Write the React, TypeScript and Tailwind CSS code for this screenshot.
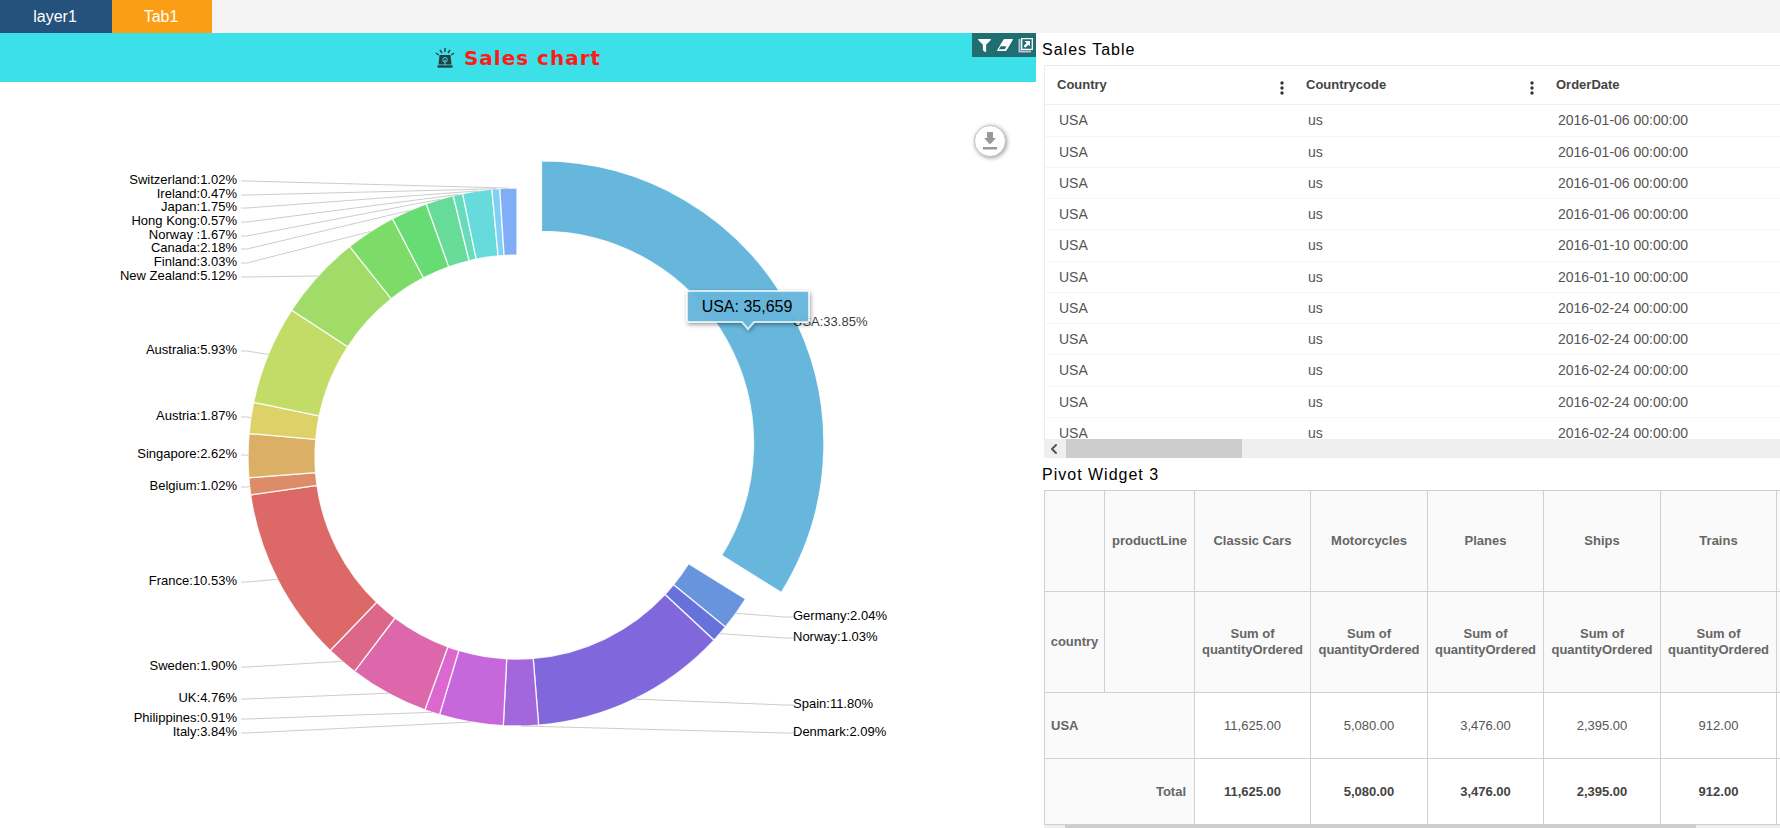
import { FaFilter } from "react-icons/fa";
import { LuChevronLeft } from "react-icons/lu";

type Slice = {
  country: string;
  percent: number;
  color: string;
  labelY: number;
};

const slices: Slice[] = [
  { country: "USA", percent: 33.85, color: "#67b7dc", labelY: 244 },
  { country: "Germany", percent: 2.04, color: "#6794dc", labelY: 538 },
  { country: "Norway", percent: 1.03, color: "#6771dc", labelY: 559 },
  { country: "Spain", percent: 11.8, color: "#8067dc", labelY: 626 },
  { country: "Denmark", percent: 2.09, color: "#a367dc", labelY: 654 },
  { country: "Italy", percent: 3.84, color: "#c767dc", labelY: 654 },
  { country: "Philippines", percent: 0.91, color: "#dc67ce", labelY: 640 },
  { country: "UK", percent: 4.76, color: "#dc67ab", labelY: 620 },
  { country: "Sweden", percent: 1.9, color: "#dc6788", labelY: 588 },
  { country: "France", percent: 10.53, color: "#dc6967", labelY: 503 },
  { country: "Belgium", percent: 1.02, color: "#dc8c67", labelY: 408 },
  { country: "Singapore", percent: 2.62, color: "#dcaf67", labelY: 376 },
  { country: "Austria", percent: 1.87, color: "#dcd267", labelY: 338 },
  { country: "Australia", percent: 5.93, color: "#c3dc67", labelY: 272 },
  { country: "New Zealand", percent: 5.12, color: "#a0dc67", labelY: 198 },
  { country: "Finland", percent: 3.03, color: "#7ddc67", labelY: 184 },
  { country: "Canada", percent: 2.18, color: "#67dc75", labelY: 170 },
  { country: "Norway ", percent: 1.67, color: "#67dc98", labelY: 157 },
  { country: "Hong Kong", percent: 0.57, color: "#67dcbb", labelY: 143 },
  { country: "Japan", percent: 1.75, color: "#67dadc", labelY: 129 },
  { country: "Ireland", percent: 0.47, color: "#80d0f5", labelY: 116 },
  { country: "Switzerland", percent: 1.02, color: "#80adf5", labelY: 102 },
];

const CENTER = { x: 517, y: 375 };
const OUTER = 269;
const INNER = 202;

const orders = [
  "2016-01-06 00:00:00",
  "2016-01-06 00:00:00",
  "2016-01-06 00:00:00",
  "2016-01-06 00:00:00",
  "2016-01-10 00:00:00",
  "2016-01-10 00:00:00",
  "2016-02-24 00:00:00",
  "2016-02-24 00:00:00",
  "2016-02-24 00:00:00",
  "2016-02-24 00:00:00",
  "2016-02-24 00:00:00",
];

const productLines = [
  { name: "Classic Cars", total: "11,625.00" },
  { name: "Motorcycles", total: "5,080.00" },
  { name: "Planes", total: "3,476.00" },
  { name: "Ships", total: "2,395.00" },
  { name: "Trains", total: "912.00" },
];

const point = (cx: number, cy: number, r: number, share: number) => {
  const angle = (share / 100) * Math.PI * 2;
  return { x: cx + r * Math.sin(angle), y: cy - r * Math.cos(angle) };
};

const slicePath = (from: number, to: number, active: boolean) => {
  // the active slice is pulled out and slightly enlarged
  const scale = active ? 1.05 : 1;
  const c = active ? point(CENTER.x, CENTER.y, 28, (from + to) / 2) : CENTER;
  const outer = OUTER * scale;
  const inner = INNER * scale;
  const a = point(c.x, c.y, outer, from);
  const b = point(c.x, c.y, outer, to);
  const d = point(c.x, c.y, inner, to);
  const e = point(c.x, c.y, inner, from);
  return `M${a.x} ${a.y}A${outer} ${outer} 0 0 1 ${b.x} ${b.y}L${d.x} ${d.y}A${inner} ${inner} 0 0 0 ${e.x} ${e.y}Z`;
};

const SirenIcon = () => (
  <svg viewBox="0 0 20 20" className="h-5 w-5" fill="none" aria-hidden="true">
    <path
      d="M10 0v4M5 2l2 3M15 2l-2 3M.8 5l3 2M19.200 5l-3 2"
      stroke="#263f43"
      strokeWidth="1.4"
    />
    <path d="M4.500 7h11l1 9.500h-13z" fill="#263f43" />
    <path d="M2.500 17.300h15v2.400h-15z" fill="#263f43" />
    <circle cx="10" cy="11.800" r="2.300" stroke="#3be0e8" strokeWidth="1" />
    <path d="M10 11.500v5.500" stroke="#3be0e8" strokeWidth="1" />
  </svg>
);

const EraserIcon = () => (
  <svg viewBox="0 0 18 14" className="h-[14px] w-[18px]" aria-hidden="true">
    <path d="M8 1.500h8.500L10 12.500H1.500z" fill="#fff" stroke="#fff" strokeLinejoin="round" />
    <path d="M4.800 8.300h5.700l-1.800 3H2.900z" fill="#206d72" />
  </svg>
);

const ExpandIcon = () => (
  <svg viewBox="0 0 16 16" className="h-4 w-4" fill="none" aria-hidden="true">
    <path d="M1.500 2v12.500H13" stroke="#b9c4dc" strokeWidth="2" />
    <path d="M3.700 1.700h10.600v10.600H3.700z" stroke="#fff" strokeWidth="1.300" />
    <path d="M6.500 4h5.500v5.500l-1.700-1.700-3 3-1.700-1.700 3-3z" fill="#fff" />
  </svg>
);

const DotsIcon = () => (
  <svg viewBox="0 0 4 14" className="h-[14px] w-1" fill="#333" aria-hidden="true">
    <circle cx="2" cy="2" r="1.700" />
    <circle cx="2" cy="7" r="1.700" />
    <circle cx="2" cy="12" r="1.700" />
  </svg>
);

const DonutChart = () => {
  let sum = 0;
  const items = slices.map((slice) => {
    const from = sum;
    sum += slice.percent;
    return { ...slice, from, to: sum, mid: (from + sum) / 2 };
  });

  return (
    <svg
      viewBox="0 0 1036 746"
      className="block h-auto w-full text-[13px]"
      role="img"
      aria-label="Sales by country"
    >
      <defs>
        <filter id="tooltipShadow" x="-20%" y="-40%" width="140%" height="200%">
          <feDropShadow dx="1" dy="2" stdDeviation="2" floodOpacity="0.4" />
        </filter>
      </defs>
      {items.map((item, i) => (
        <path
          key={item.country}
          d={slicePath(item.from, item.to, i === 0)}
          fill={item.color}
          stroke="#fff"
          strokeWidth="1.300"
          strokeOpacity="0.85"
        />
      ))}
      {items.map((item, i) => {
        const right = item.mid < 51;
        const edge = point(CENTER.x, CENTER.y, OUTER, item.mid);
        const tickY = item.labelY - 3;
        return (
          <g key={item.country}>
            {i > 0 && (
              <path
                d={
                  right
                    ? `M${edge.x} ${edge.y}L785 ${tickY}H794`
                    : `M${edge.x} ${edge.y}L247 ${tickY}H241`
                }
                fill="none"
                stroke="#000"
                strokeOpacity="0.2"
              />
            )}
            <text
              x={right ? 793 : 237}
              y={item.labelY}
              textAnchor={right ? "start" : "end"}
              fill="#000"
              fillOpacity={i === 0 ? 0.8 : 1}
            >
              {item.country}:{item.percent.toFixed(2)}%
            </text>
          </g>
        );
      })}
      <path
        d="M689 209H807Q809 209 809 211V238Q809 240 807 240H754L748 247L742 240H689Q687 240 687 238V211Q687 209 689 209Z"
        fill="#67b7dc"
        fillOpacity="0.95"
        stroke="#fff"
        strokeWidth="2"
        strokeOpacity="0.7"
        filter="url(#tooltipShadow)"
      />
      <text x="747" y="230" textAnchor="middle" className="text-base">
        USA: 35,659
      </text>
    </svg>
  );
};

const SalesChart = () => (
  <section className="relative min-w-0">
    <header className="flex h-[49px] items-center justify-center gap-[9px] bg-[#3be0e8]">
      <SirenIcon />
      <h2 className="font-['DejaVu_Sans'] text-xl font-bold tracking-[1px] text-[#ff1a1a]">
        Sales chart
      </h2>
    </header>
    <div className="absolute top-0 right-0 flex h-6 items-center gap-1 bg-[#206d72] pr-[2px] pl-1 text-white">
      <button aria-label="Filter" className="flex w-4 justify-center">
        <FaFilter size={13} />
      </button>
      <button aria-label="Clear">
        <EraserIcon />
      </button>
      <button aria-label="Expand">
        <ExpandIcon />
      </button>
    </div>
    <button
      aria-label="Download"
      className="absolute top-[92px] right-[30px] flex h-8 w-8 items-center justify-center rounded-full border border-[#c4c4c4] bg-white shadow-[1px_1px_4px_#00000066]"
    >
      <svg viewBox="0 0 14 18" className="h-[18px] w-[14px]" fill="#999" aria-hidden="true">
        <path d="M4 0h6v6h3l-6 6.500L1 6h3zM0 15h14v2.500H0z" />
      </svg>
    </button>
    <DonutChart />
  </section>
);

const SalesTable = () => (
  <section className="flex min-h-0 min-w-0 flex-col">
    <h2 className="h-8 shrink-0 pl-[6px] text-base leading-[34px] tracking-[1px]">
      Sales Table
    </h2>
    <div className="ml-2 min-h-0 flex-1 overflow-hidden border-t border-l border-[#ebebeb]">
      <table className="w-full table-fixed text-left text-sm text-[#555]">
        <thead>
          <tr className="h-[38px] border-b border-[#f0f0f0] text-[13px] text-[#444]">
            <th className="w-[249px] pt-[2px] pl-3">
              <div className="flex items-center justify-between pr-[10px]">
                Country
                <button aria-label="Country menu" className="pt-1">
                  <DotsIcon />
                </button>
              </div>
            </th>
            <th className="w-[250px] pt-[2px] pl-3">
              <div className="flex items-center justify-between pr-[10px]">
                Countrycode
                <button aria-label="Countrycode menu" className="pt-1">
                  <DotsIcon />
                </button>
              </div>
            </th>
            <th className="pt-[2px] pl-3">OrderDate</th>
          </tr>
        </thead>
        <tbody>
          {orders.map((date, i) => (
            <tr
              key={i}
              className="h-[31px] border-b border-[#f5f5f5] leading-[18px] nth-[4n+1]:h-[32px]"
            >
              <td className="pl-[14px]">USA</td>
              <td className="pl-[14px]">us</td>
              <td className="pl-[14px]">{date}</td>
            </tr>
          ))}
        </tbody>
      </table>
    </div>
    <div className="ml-2 flex h-[19px] shrink-0 items-center bg-[#efefef]">
      <LuChevronLeft size={16} strokeWidth={3} className="mr-1 ml-[2px] text-[#555]" />
      <div className="h-full w-[176px] bg-[#cdcdcd]" />
    </div>
  </section>
);

const PivotTable = () => (
  <section className="min-h-0 min-w-0 overflow-hidden">
    <h2 className="h-8 pl-[6px] text-base leading-[34px] tracking-[1px]">
      Pivot Widget 3
    </h2>
    <div className="ml-2 overflow-hidden">
      <table className="w-[853px] table-fixed border-collapse text-center text-[13px] leading-4 text-[#555] [&_td]:border [&_td]:border-[#d0d0d0] [&_th]:border [&_th]:border-[#d0d0d0] [&_th]:bg-[#fafafa] [&_th]:text-[#666]">
        <colgroup>
          <col className="w-[60px]" />
          <col className="w-[90px]" />
          {productLines.map((line) => (
            <col key={line.name} className="w-[116px] even:w-[117px]" />
          ))}
          <col />
        </colgroup>
        <thead>
          <tr className="h-[101px]">
            <th />
            <th>productLine</th>
            {productLines.map((line) => (
              <th key={line.name}>{line.name}</th>
            ))}
            <th />
          </tr>
          <tr className="h-[101px]">
            <th>country</th>
            <th />
            {productLines.map((line) => (
              <th key={line.name}>
                Sum of
                <br />
                quantityOrdered
              </th>
            ))}
            <th />
          </tr>
        </thead>
        <tbody>
          <tr className="h-[66px]">
            <th colSpan={2} className="pl-[6px] text-left">
              USA
            </th>
            {productLines.map((line) => (
              <td key={line.name}>{line.total}</td>
            ))}
            <td />
          </tr>
          <tr className="h-[66px]">
            <th colSpan={2} className="pr-2 text-right">
              Total
            </th>
            {productLines.map((line) => (
              <td key={line.name} className="font-bold text-[#444]">
                {line.total}
              </td>
            ))}
            <td />
          </tr>
        </tbody>
      </table>
      <div className="flex h-5 bg-[#efefef] pl-[21px]">
        <div className="h-full w-[631px] bg-[#cdcdcd]" />
      </div>
    </div>
  </section>
);

export default function App() {
  return (
    <main className="flex h-screen flex-col overflow-hidden bg-white font-['Liberation_Sans',Arial,sans-serif] text-black">
      <nav className="flex h-[33px] shrink-0 bg-[#f3f3f3] text-base text-white">
        <button className="w-[112px] bg-[#24527d] pr-[2px]">layer1</button>
        <button className="w-[100px] bg-[#fa9f15] pr-[2px]">Tab1</button>
      </nav>
      <div className="grid min-h-0 flex-1 grid-cols-[1036fr_744fr]">
        <SalesChart />
        <div className="grid min-h-0 min-w-0 grid-rows-[425fr_370fr]">
          <SalesTable />
          <PivotTable />
        </div>
      </div>
    </main>
  );
}
